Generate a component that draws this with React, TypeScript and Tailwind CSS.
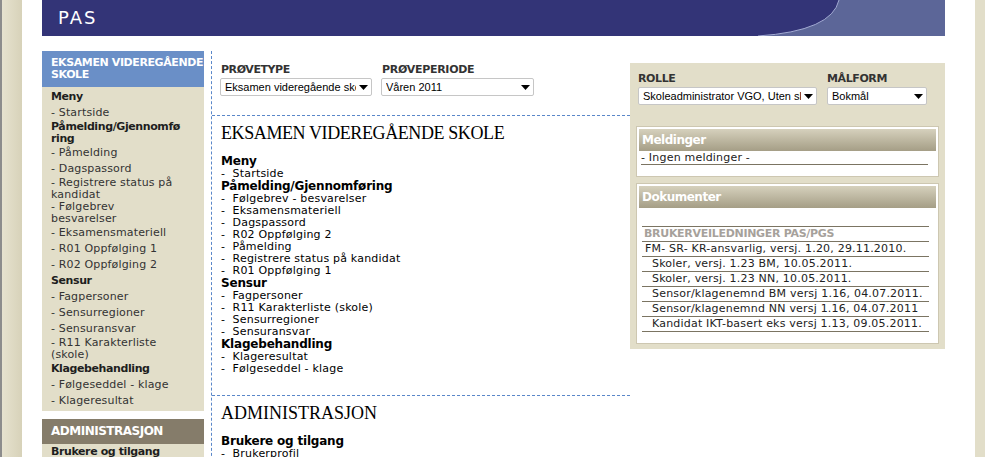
import React from "react";

const dash = "-\u00a0\u00a0";

function Select({ value, className }: { value: string; className: string }) {
  return (
    <div className={"flex h-[18px] items-center rounded-[2px] border border-[#c6c6c6] bg-white pl-[4px] pr-[3px] " + className}>
      <span className="min-w-0 flex-1 overflow-hidden whitespace-nowrap font-['Liberation_Sans',Arial,sans-serif] text-[11px] leading-[16px] tracking-normal text-black">
        {value}
      </span>
      <svg width="9" height="5" viewBox="0 0 9 5" className="ml-[3px] shrink-0">
        <path d="M0 0H9L4.5 5Z" fill="#000" />
      </svg>
    </div>
  );
}

function SideH({ children, wrap }: { children: React.ReactNode; wrap?: boolean }) {
  return (
    <div className={(wrap ? "leading-[12px]" : "leading-[16px]") + " font-bold tracking-[-0.4px] text-[#1e1e1e]"}>
      {children}
    </div>
  );
}

function SideI({ children, wrap }: { children: React.ReactNode; wrap?: boolean }) {
  return <div className={(wrap ? "leading-[12px]" : "leading-[16px]") + " tracking-[0.15px] text-[#333]"}>{children}</div>;
}

const menu: { title: string; items: string[] }[] = [
  { title: "Meny", items: ["Startside"] },
  {
    title: "Påmelding/Gjennomføring",
    items: [
      "Følgebrev - besvarelser",
      "Eksamensmateriell",
      "Dagspassord",
      "R02 Oppfølging 2",
      "Påmelding",
      "Registrere status på kandidat",
      "R01 Oppfølging 1",
    ],
  },
  { title: "Sensur", items: ["Fagpersoner", "R11 Karakterliste (skole)", "Sensurregioner", "Sensuransvar"] },
  { title: "Klagebehandling", items: ["Klageresultat", "Følgeseddel - klage"] },
];

const docs = [
  { t: "FM- SR- KR-ansvarlig, versj. 1.20, 29.11.2010.", first: true },
  { t: "Skoler, versj. 1.23 BM, 10.05.2011." },
  { t: "Skoler, versj. 1.23 NN, 10.05.2011." },
  { t: "Sensor/klagenemnd BM versj 1.16, 04.07.2011." },
  { t: "Sensor/klagenemnd NN versj 1.16, 04.07.2011" },
  { t: "Kandidat IKT-basert eks versj 1.13, 09.05.2011." },
];

function Sidebar() {
  return (
    <aside className="w-[162px] shrink-0 text-[11px]">
      <div className="h-[36px] bg-[#6a8fc7] pl-[9px] pt-[6px] text-[11px] font-bold leading-[12px] tracking-[-0.4px] text-white whitespace-nowrap">
        EKSAMEN VIDEREGÅENDE
        <br />
        SKOLE
      </div>
      <div className="bg-[#e2dec9] pl-[9px] pt-[2px] pb-[2px]">
        <SideH>Meny</SideH>
        <SideI>- Startside</SideI>
        <SideH wrap>
          Påmelding/Gjennomfø
          <br />
          ring
        </SideH>
        <SideI>- Påmelding</SideI>
        <SideI>- Dagspassord</SideI>
        <SideI wrap>
          - Registrere status på
          <br />
          kandidat
        </SideI>
        <SideI wrap>
          - Følgebrev
          <br />
          besvarelser
        </SideI>
        <SideI>- Eksamensmateriell</SideI>
        <SideI>- R01 Oppfølging 1</SideI>
        <SideI>- R02 Oppfølging 2</SideI>
        <SideH>Sensur</SideH>
        <SideI>- Fagpersoner</SideI>
        <SideI>- Sensurregioner</SideI>
        <SideI>- Sensuransvar</SideI>
        <SideI wrap>
          - R11 Karakterliste
          <br />
          (skole)
        </SideI>
        <SideH>Klagebehandling</SideH>
        <SideI>- Følgeseddel - klage</SideI>
        <SideI>- Klageresultat</SideI>
      </div>
      <div className="mt-[8px] h-[25px] bg-[#857c6a] pl-[9px] text-[12px] font-bold leading-[25px] tracking-[-0.5px] text-white">
        ADMINISTRASJON
      </div>
      <div className="bg-[#e2dec9] pl-[9px]">
        <SideH>Brukere og tilgang</SideH>
        <SideI>- Brukerprofil</SideI>
      </div>
    </aside>
  );
}

function MainColumn() {
  return (
    <main className="w-[419px] shrink-0 border-l border-dashed border-[#5a87c9]">
      <div className="h-[65px] border-b border-dashed border-[#5a87c9] pl-[8px] pt-[12px]">
        <div className="flex gap-[9px]">
          <div>
            <div className="pl-[1px] text-[11px] font-bold leading-[13px] tracking-[-0.45px] text-[#333]">PRØVETYPE</div>
            <Select value="Eksamen videregående skole" className="mt-[2px] w-[152px]" />
          </div>
          <div>
            <div className="pl-[1px] text-[11px] font-bold leading-[13px] tracking-[-0.3px] text-[#333]">PRØVEPERIODE</div>
            <Select value="Våren 2011" className="mt-[2px] w-[153px]" />
          </div>
        </div>
      </div>

      <section className="border-b border-dashed border-[#5a87c9] pb-[20px] pl-[9px] pt-[7px]">
        <h1 className="font-['Liberation_Serif','Times_New_Roman',serif] text-[18px] leading-[21px] tracking-[-0.4px] text-black">
          EKSAMEN VIDEREGÅENDE SKOLE
        </h1>
        <div className="mt-[11px]">
          {menu.map((g) => (
            <div key={g.title}>
              <div className="text-[12px] font-bold leading-[13px] tracking-[-0.2px] text-black">{g.title}</div>
              {g.items.map((it) => (
                <div key={it} className="text-[11px] leading-[12px] tracking-[0.2px] text-black">
                  {dash}
                  {it}
                </div>
              ))}
            </div>
          ))}
        </div>
      </section>

      <section className="pl-[9px] pt-[7px]">
        <h1 className="font-['Liberation_Serif','Times_New_Roman',serif] text-[18px] leading-[21px] text-black">
          ADMINISTRASJON
        </h1>
        <div className="mt-[11px] text-[12px] font-bold leading-[13px] tracking-[-0.2px] text-black">Brukere og tilgang</div>
        <div className="text-[11px] leading-[12px] tracking-[0.2px] text-black">
          {dash}Brukerprofil
        </div>
      </section>
    </main>
  );
}

function BoxHeader({ children }: { children: React.ReactNode }) {
  return (
    <div className="h-[22px] bg-gradient-to-b from-[#d6d1bd] to-[#a59e86] pl-[3px] text-[12px] font-bold leading-[22px] tracking-[-0.5px] text-white">
      {children}
    </div>
  );
}

function RightPanel() {
  return (
    <div className="mt-[12px] h-[286px] w-[315px] shrink-0 bg-[#e2dec9] px-[6px] pt-[9px]">
      <div className="flex gap-[10px] pl-[2px]">
        <div>
          <div className="text-[11px] font-bold leading-[13px] tracking-[-0.4px] text-[#333]">ROLLE</div>
          <Select value="Skoleadministrator VGO, Uten skole" className="mt-[2px] w-[179px]" />
        </div>
        <div>
          <div className="text-[11px] font-bold leading-[13px] tracking-[-0.4px] text-[#333]">MÅLFORM</div>
          <Select value="Bokmål" className="mt-[2px] w-[100px]" />
        </div>
      </div>

      <div className="mt-[21px] border border-[#cdc7b1] bg-white p-[2px] pb-[11px]">
        <BoxHeader>Meldinger</BoxHeader>
        <div className="ml-[2px] mr-[8px] border-b border-[#7b7462] text-[11px] leading-[13px] tracking-[0.2px] text-[#222]">
          - Ingen meldinger -
        </div>
      </div>

      <div className="mt-[6px] border border-[#cdc7b1] bg-white p-[2px] pb-[11px]">
        <BoxHeader>Dokumenter</BoxHeader>
        <div className="ml-[3px] mr-[7px] mt-[18px] border-t border-[#7b7462]">
          <div className="border-b border-[#7b7462] pl-[2px] text-[11px] font-bold leading-[14px] tracking-[-0.3px] text-[#a6a19b]">
            BRUKERVEILEDNINGER PAS/PGS
          </div>
          {docs.map((d) => (
            <div
              key={d.t}
              className={
                (d.first ? "pl-[3px]" : "pl-[10px]") +
                " border-b border-[#7b7462] text-[11px] leading-[14px] tracking-[0.2px] text-[#222]"
              }
            >
              {d.t}
            </div>
          ))}
        </div>
      </div>
    </div>
  );
}

export default function App() {
  return (
    <div className="flex min-h-[457px] w-full bg-white font-['DejaVu_Sans',Verdana,sans-serif]">
      <div className="w-[22px] shrink-0 border-l-2 border-[#8c8c8c] bg-gradient-to-r from-[#e6e2cf] to-[#d7d2b9]" />
      <div className="flex-1 pl-[20px] pr-[30px]">
        <header className="relative h-[36px] w-[903px] overflow-hidden bg-[#333477]">
          <svg className="absolute inset-0" width="903" height="36" viewBox="0 0 903 36">
            <path d="M716 36 Q790 31 797 0 L903 0 L903 36 Z" fill="#5c6698" />
            <path d="M716 36 Q790 31 797 0" fill="none" stroke="#a3abd3" strokeWidth="1" />
          </svg>
          <div className="relative pl-[16px] text-[18px] leading-[35px] tracking-[2px] text-white">PAS</div>
        </header>
        <div className="flex pt-[15px]">
          <Sidebar />
          <div className="w-[7px] shrink-0" />
          <MainColumn />
          <RightPanel />
        </div>
      </div>
      <div className="w-[10px] shrink-0 bg-[#e2dec9]" />
    </div>
  );
}
